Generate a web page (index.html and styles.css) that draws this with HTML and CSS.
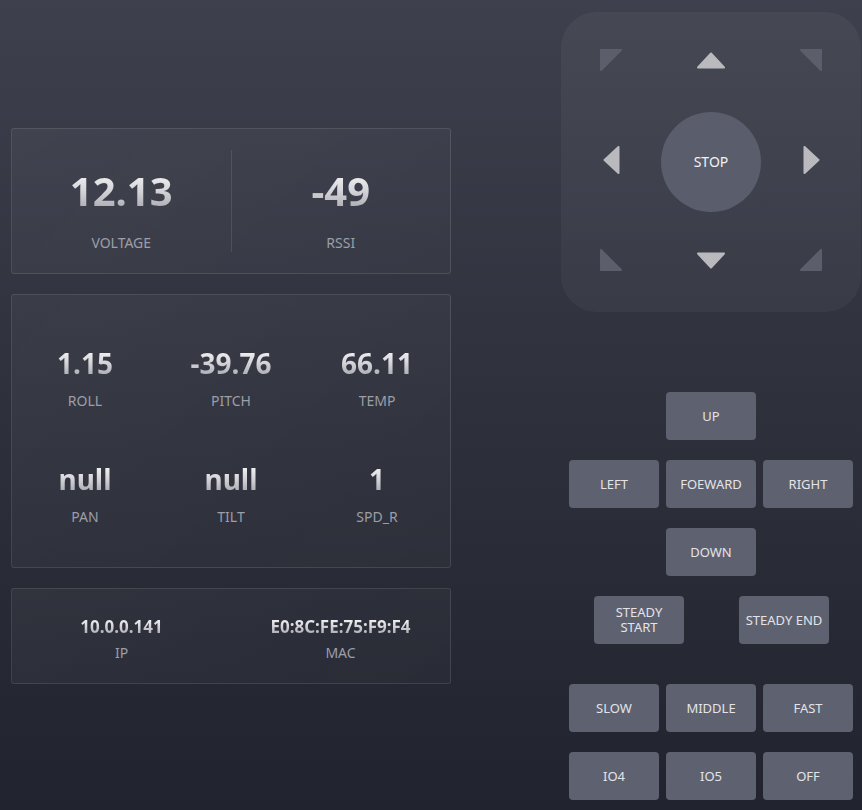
FILE: index.html
```html
<!DOCTYPE html>
<html>
<head>
<meta charset="utf-8">
<link rel="stylesheet" href="styles.css">
</head>
<body>
<div class="page">
  <div class="left">
    <div class="card card-power">
      <div class="col">
        <div class="val big">12.13</div>
        <div class="lbl">VOLTAGE</div>
      </div>
      <div class="col divided">
        <div class="val big">-49</div>
        <div class="lbl">RSSI</div>
      </div>
    </div>
    <div class="card card-attitude">
      <div class="cell"><div class="val mid">1.15</div><div class="lbl">ROLL</div></div>
      <div class="cell"><div class="val mid">-39.76</div><div class="lbl">PITCH</div></div>
      <div class="cell"><div class="val mid">66.11</div><div class="lbl">TEMP</div></div>
      <div class="cell"><div class="val mid">null</div><div class="lbl">PAN</div></div>
      <div class="cell"><div class="val mid">null</div><div class="lbl">TILT</div></div>
      <div class="cell"><div class="val mid">1</div><div class="lbl">SPD_R</div></div>
    </div>
    <div class="card card-net">
      <div class="ncol"><div class="val small">10.0.0.141</div><div class="lbl">IP</div></div>
      <div class="ncol"><div class="val small">E0:8C:FE:75:F9:F4</div><div class="lbl">MAC</div></div>
    </div>
  </div>
  <div class="right">
    <div class="dpad">
      <div class="dcell"><svg width="22" height="22" viewBox="0 0 22 22"><polygon points="1,1 21,1 1,21" class="corner"/></svg></div>
      <div class="dcell"><svg width="28" height="17" viewBox="0 0 28 17"><polygon points="14,1.5 27,15.5 1,15.5" class="arrow"/></svg></div>
      <div class="dcell"><svg width="22" height="22" viewBox="0 0 22 22"><polygon points="1,1 21,1 21,21" class="corner"/></svg></div>
      <div class="dcell"><svg width="17" height="28" viewBox="0 0 17 28"><polygon points="1.5,14 15.5,1 15.5,27" class="arrow"/></svg></div>
      <div class="dcell"><button class="stop">STOP</button></div>
      <div class="dcell"><svg width="17" height="28" viewBox="0 0 17 28"><polygon points="15.5,14 1.5,1 1.5,27" class="arrow"/></svg></div>
      <div class="dcell"><svg width="22" height="22" viewBox="0 0 22 22"><polygon points="1,1 1,21 21,21" class="corner"/></svg></div>
      <div class="dcell"><svg width="28" height="17" viewBox="0 0 28 17"><polygon points="14,15.5 27,1.5 1,1.5" class="arrow"/></svg></div>
      <div class="dcell"><svg width="22" height="22" viewBox="0 0 22 22"><polygon points="21,1 21,21 1,21" class="corner"/></svg></div>
    </div>
    <div class="btns">
      <div class="row"><button class="btn">UP</button></div>
      <div class="row"><button class="btn">LEFT</button><button class="btn">FOEWARD</button><button class="btn">RIGHT</button></div>
      <div class="row"><button class="btn">DOWN</button></div>
      <div class="row steady"><button class="btn two-line"><span class="ln">STEADY</span><span class="ln">START</span></button><button class="btn">STEADY END</button></div>
      <div class="row speed"><button class="btn">SLOW</button><button class="btn">MIDDLE</button><button class="btn">FAST</button></div>
      <div class="row"><button class="btn">IO4</button><button class="btn">IO5</button><button class="btn">OFF</button></div>
    </div>
  </div>
</div>
</body>
</html>
```
FILE: styles.css
```css
html, body {
  margin: 0;
  padding: 0;
  height: 100%;
}
body {
  background: linear-gradient(180deg, #3e414d 0%, #2e313c 50%, #21242e 100%);
  font-family: "Noto Sans", "Open Sans", sans-serif;
  color: #e6e6e8;
  min-height: 810px;
}
.page {
  display: flex;
  justify-content: space-between;
  padding: 12px 1px 0 11px;
}
.left {
  width: 440px;
  padding-top: 116px;
  display: flex;
  flex-direction: column;
  gap: 20px;
}
.card {
  box-sizing: border-box;
  width: 440px;
  border: 1px solid rgba(255, 255, 255, 0.1);
  border-radius: 3px;
  background: linear-gradient(135deg, rgba(255,255,255,0.045), rgba(255,255,255,0.02));
}
.val {
  font-weight: 700;
  line-height: 1;
  background: linear-gradient(180deg, #f6f6f8 0%, #d8d8dc 45%, #a6a6ad 100%);
  -webkit-background-clip: text;
  background-clip: text;
  color: transparent;
  -webkit-text-fill-color: transparent;
}
.val.big { font-size: 40px; }
.val.mid { font-size: 28px; }
.val.small { font-size: 17px; }
.lbl {
  font-size: 14px;
  line-height: 1;
  color: #9c9ea8;
}
.card-power {
  display: flex;
  padding: 21px 0;
}
.col {
  flex: 1;
  height: 102px;
  box-sizing: border-box;
  padding-top: 21px;
  display: flex;
  flex-direction: column;
  align-items: center;
}
.col .val { margin-bottom: 25px; }
.col.divided { border-left: 1px solid rgba(255, 255, 255, 0.1); }
.card-attitude {
  display: grid;
  grid-template-columns: repeat(3, 1fr);
  row-gap: 57px;
  padding: 54px 0 43px;
}
.cell {
  display: flex;
  flex-direction: column;
  align-items: center;
}
.cell .val { margin-bottom: 17px; }
.card-net {
  display: flex;
  padding: 29px 0 23px;
}
.ncol {
  flex: 1;
  display: flex;
  flex-direction: column;
  align-items: center;
}
.ncol .val { margin-bottom: 11px; }
.right {
  width: 300px;
}
.dpad {
  width: 300px;
  height: 300px;
  border-radius: 36px;
  background: linear-gradient(180deg, rgba(255,255,255,0.045), rgba(255,255,255,0.035));
  display: grid;
  grid-template-columns: repeat(3, 100px);
  grid-template-rows: repeat(3, 100px);
}
.dcell {
  display: flex;
  align-items: center;
  justify-content: center;
}
.dcell svg {
  display: block;
  margin-top: -4px;
}
.arrow {
  fill: #b9b9be;
  stroke: #b9b9be;
  stroke-width: 2;
  stroke-linejoin: round;
}
.corner {
  fill: #5c5f6b;
  stroke: #5c5f6b;
  stroke-width: 2;
  stroke-linejoin: round;
}
.stop {
  width: 100px;
  height: 100px;
  border-radius: 50%;
  border: none;
  background: #5a5d6b;
  color: #f2f2f4;
  font-family: "Noto Sans", "Open Sans", sans-serif;
  font-size: 14px;
  line-height: 18px;
  padding: 0 0 1px;
}
.btns {
  margin-top: 80px;
  display: flex;
  flex-direction: column;
  gap: 20px;
}
.row {
  display: flex;
  justify-content: center;
  gap: 7px;
}
.row.steady {
  justify-content: flex-start;
  padding-left: 33px;
  gap: 55px;
}
.row.speed { margin-top: 20px; }
.btn {
  width: 90px;
  height: 48px;
  border: none;
  border-radius: 4px;
  background: #5e616f;
  color: #e4e4e8;
  font-family: "Noto Sans", "Open Sans", sans-serif;
  font-size: 13px;
  line-height: 15px;
  padding: 0;
}
.two-line {
  display: flex;
  flex-direction: column;
  align-items: center;
  justify-content: center;
  gap: 0;
}
.ln {
  display: block;
  line-height: 15px;
  height: 15px;
  overflow: visible;
}
```
